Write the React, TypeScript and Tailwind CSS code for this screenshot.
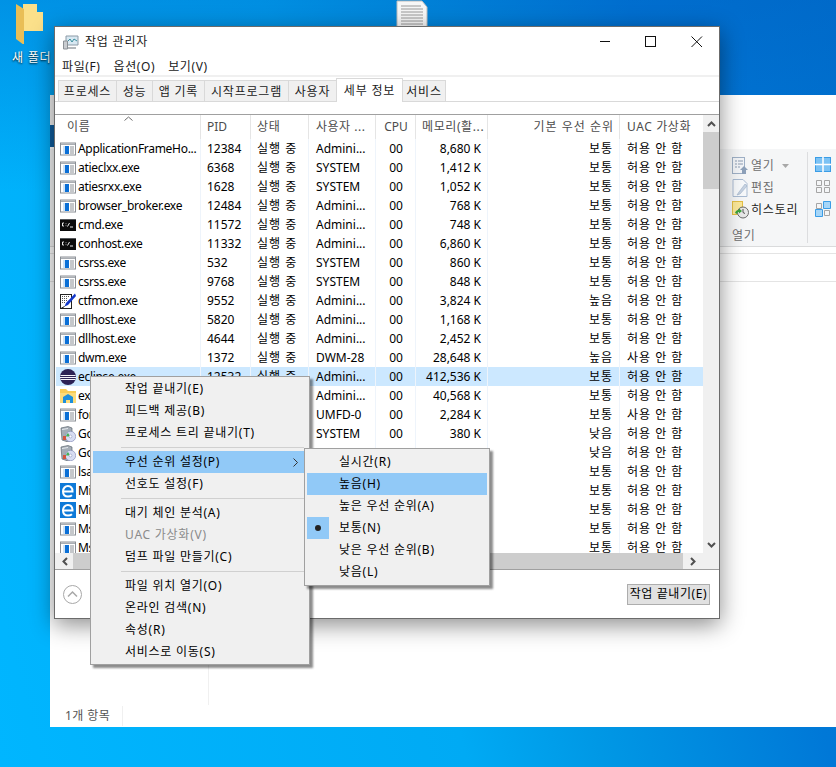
import React from "react";

type IconKind = "app" | "cmd" | "pen" | "eclipse" | "folder" | "setup" | "edge";

type Proc = {
  icon: IconKind;
  name: string;
  pid: string;
  user: string;
  mem: string;
  prio?: string;
  uac?: string;
  selected?: boolean;
};

const procs: Proc[] = [
  { icon: "app", name: "ApplicationFrameHo...", pid: "12384", user: "Admini...", mem: "8,680 K" },
  { icon: "app", name: "atieclxx.exe", pid: "6368", user: "SYSTEM", mem: "1,412 K" },
  { icon: "app", name: "atiesrxx.exe", pid: "1628", user: "SYSTEM", mem: "1,052 K" },
  { icon: "app", name: "browser_broker.exe", pid: "12484", user: "Admini...", mem: "768 K" },
  { icon: "cmd", name: "cmd.exe", pid: "11572", user: "Admini...", mem: "748 K" },
  { icon: "cmd", name: "conhost.exe", pid: "11332", user: "Admini...", mem: "6,860 K" },
  { icon: "app", name: "csrss.exe", pid: "532", user: "SYSTEM", mem: "860 K" },
  { icon: "app", name: "csrss.exe", pid: "9768", user: "SYSTEM", mem: "848 K" },
  { icon: "pen", name: "ctfmon.exe", pid: "9552", user: "Admini...", mem: "3,824 K", prio: "높음" },
  { icon: "app", name: "dllhost.exe", pid: "5820", user: "Admini...", mem: "1,168 K" },
  { icon: "app", name: "dllhost.exe", pid: "4644", user: "Admini...", mem: "2,452 K" },
  { icon: "app", name: "dwm.exe", pid: "1372", user: "DWM-28", mem: "28,648 K", prio: "높음", uac: "사용 안 함" },
  { icon: "eclipse", name: "eclipse.exe", pid: "12532", user: "Admini...", mem: "412,536 K", selected: true },
  { icon: "folder", name: "explorer.exe", pid: "6044", user: "Admini...", mem: "40,568 K" },
  { icon: "app", name: "fontdrvhost.exe", pid: "1012", user: "UMFD-0", mem: "2,284 K", uac: "사용 안 함" },
  { icon: "setup", name: "GoogleCrashHan...", pid: "3340", user: "SYSTEM", mem: "380 K", prio: "낮음" },
  { icon: "setup", name: "GoogleCrashHan...", pid: "3352", user: "SYSTEM", mem: "", prio: "낮음" },
  { icon: "app", name: "lsass.exe", pid: "680", user: "SYSTEM", mem: "" },
  { icon: "edge", name: "MicrosoftEdge.exe", pid: "8120", user: "Admini...", mem: "" },
  { icon: "edge", name: "MicrosoftEdgeCP...", pid: "8344", user: "Admini...", mem: "" },
  { icon: "app", name: "MsMpEng.exe", pid: "2740", user: "SYSTEM", mem: "" },
  { icon: "app", name: "MsSense.exe", pid: "2812", user: "SYSTEM", mem: "" },
];

function ProcIcon({ kind }: { kind: IconKind }) {
  if (kind === "app")
    return (
      <svg className="shrink-0" width="16" height="16" viewBox="0 0 16 16">
        <rect x="0.5" y="2" width="15" height="12" fill="#fff" stroke="#8b9096" />
        <rect x="1" y="2.5" width="14" height="1.5" fill="#a9adb2" />
        <rect x="5" y="5" width="4" height="8" fill="#0a6fd6" />
        <rect x="3" y="5" width="2" height="8" fill="#cfe3f7" />
        <path d="M10 6h4M10 8h4M10 10h4M10 12h4" stroke="#8b9096" />
      </svg>
    );
  if (kind === "cmd")
    return (
      <svg className="shrink-0" width="16" height="16" viewBox="0 0 16 16">
        <rect x="0" y="2" width="16" height="12" fill="#0c0c0c" />
        <rect x="0" y="2" width="16" height="1" fill="#55585c" />
        <path d="M4 6H2.5v3H4M6 6.5v.6M6 8.5v.6M7.5 9.5 9.5 6M10 10h3" stroke="#e8e8e8" fill="none" />
      </svg>
    );
  if (kind === "pen")
    return (
      <svg className="shrink-0" width="16" height="16" viewBox="0 0 16 16">
        <rect x="0.5" y="1.5" width="11" height="14" fill="#fff" stroke="#222" />
        <path d="M2 3.5h8M2 5.5h6M2 7.5h5M2 9.5h4" stroke="#555" strokeDasharray="1 1" />
        <path d="M15 0.5 6 10l-1.5 3.5L8 12l8-9z" fill="#1237c9" />
        <path d="M4.5 13.5 1 15.5" stroke="#111" />
      </svg>
    );
  if (kind === "eclipse")
    return (
      <svg className="shrink-0" width="16" height="16" viewBox="0 0 16 16">
        <circle cx="8" cy="8" r="8" fill="#2c2255" />
        <path d="M0.5 6.5h15M0 8.5h16M0.5 10.5h15" stroke="#f4f2fa" strokeWidth="1" />
      </svg>
    );
  if (kind === "folder")
    return (
      <svg className="shrink-0" width="16" height="16" viewBox="0 0 16 16">
        <path d="M0 1h6l2 2h8v12H0z" fill="#f8cc55" />
        <path d="M0 5h16v10H0z" fill="#fbdc7c" />
        <path d="M3 15V9l5-3 5 3v6h-3v-3H6v3z" fill="#1d8fdc" />
      </svg>
    );
  if (kind === "setup")
    return (
      <svg className="shrink-0" width="16" height="16" viewBox="0 0 16 16">
        <path d="M1 2 8 0.5 12 2v12l-4 2-6-2z" fill="#a4adb6" stroke="#5d6770" strokeWidth="0.7" />
        <path d="M2 3.5 8 2.5" stroke="#e6eaee" />
        <circle cx="10.5" cy="10.5" r="5.2" fill="#d7dcf2" stroke="#7d86b4" strokeWidth="0.6" />
        <circle cx="10.5" cy="10.5" r="1.4" fill="#fff" stroke="#7d86b4" strokeWidth="0.5" />
        <path d="M6 10.5a4.5 4.5 0 0 1 2-3.6l1.5 2.4a1.6 1.6 0 0 0-.6 1.2z" fill="#45b05a" />
        <path d="M3 10h3v4H3z" fill="#d4553f" />
      </svg>
    );
  return (
    <svg className="shrink-0" width="16" height="16" viewBox="0 0 16 16">
      <rect width="16" height="16" fill="#0f7ad8" />
      <path d="M3.5 8.5h9c0-3.5-2-5.5-4.6-5.5S3 5.3 3 8.5s2.2 5 5 5c1.6 0 3-.5 4-1.3" fill="none" stroke="#fff" strokeWidth="2" />
    </svg>
  );
}

function Row({ p }: { p: Proc }) {
  return (
    <div
      className={
        "grid h-[19px] shrink-0 grid-cols-[145px_50px_58px_67px_40px_72px_132px_83px] items-center text-black " +
        (p.selected ? "bg-[#cce8ff]" : "")
      }
    >
      <div className="flex h-full items-center gap-[2px] overflow-hidden whitespace-nowrap border-r border-[#eef4fb] pl-[4px]">
        <ProcIcon kind={p.icon} />
        <span className="tracking-[-0.3px]">{p.name}</span>
      </div>
      <div className="flex h-full items-center border-r border-[#eef4fb] pl-[6px]">{p.pid}</div>
      <div className="flex h-full items-center border-r border-[#eef4fb] pl-[6px] tracking-[1px]">실행 중</div>
      <div className="flex h-full items-center border-r border-[#eef4fb] pl-[7px]">{p.user}</div>
      <div className="flex h-full items-center justify-center border-r border-[#eef4fb] pl-[1px]">00</div>
      <div className="flex h-full items-center justify-end border-r border-[#eef4fb] pr-[6px]">{p.mem}</div>
      <div className="flex h-full items-center justify-end border-r border-[#eef4fb] pr-[6px] tracking-[1px]">{p.prio ?? "보통"}</div>
      <div className="flex h-full items-center pl-[7px] tracking-[1px]">{p.uac ?? "허용 안 함"}</div>
    </div>
  );
}

function TaskManager() {
  return (
    <div className="absolute left-[54px] top-[26px] flex h-[593px] w-[666px] flex-col border border-[#6b6b6b] bg-white text-[12px] leading-[16px] shadow-[0_6px_22px_rgba(0,0,0,0.45)]">
      {/* 제목 표시줄 */}
      <div className="flex h-[26px] shrink-0 items-center pl-[8px] pt-[4px]">
        <svg className="shrink-0" width="16" height="16" viewBox="0 0 16 16">
          <path d="M3 2h12v9H3z" fill="#d8e8f2" stroke="#8c9aa6" />
          <path d="M4 8 7 5l2 3 2-3 3 2" fill="none" stroke="#3a8f9e" />
          <path d="M0.5 7h4v8h-4z" fill="#c9ccd0" stroke="#8c9196" />
          <path d="M5 13h8v2H5z" fill="#b4b8bc" />
        </svg>
        <span className="ml-[6px] tracking-[0.8px] text-[#1a1a1a]">작업 관리자</span>
        <div className="ml-auto flex items-center">
          <svg width="45" height="12" viewBox="0 0 45 12">
            <path d="M0 5.5h10" stroke="#111" />
          </svg>
          <svg width="46" height="12" viewBox="0 0 46 12">
            <rect x="0.5" y="0.5" width="10" height="10" fill="none" stroke="#111" />
          </svg>
          <svg width="28" height="12" viewBox="0 0 28 12">
            <path d="M0.5 0.5 11 11M11 0.5 0.5 11" stroke="#111" />
          </svg>
        </div>
      </div>

      {/* 메뉴 */}
      <div className="flex h-[22px] shrink-0 items-center gap-[13px] pl-[7px] pt-[6px] tracking-[0.6px] text-[#1a1a1a]">
        <span>파일(F)</span>
        <span>옵션(O)</span>
        <span>보기(V)</span>
      </div>
      <div className="h-[2px] shrink-0 bg-[#f0f0f0]" />

      {/* 탭 */}
      <div className="flex h-[25px] shrink-0 items-end border-b border-[#d9d9d9] pl-[3px] tracking-[0.8px] text-[#1a1a1a]">
        <Tab w="w-[59px]" label="프로세스" />
        <Tab w="w-[37px]" label="성능" />
        <Tab w="w-[53px]" label="앱 기록" />
        <Tab w="w-[85px]" label="시작프로그램" />
        <Tab w="w-[49px]" label="사용자" />
        <div className="z-10 -mb-px -ml-px flex h-[24px] w-[67px] items-center justify-center border border-b-0 border-[#d9d9d9] bg-white">
          세부 정보
        </div>
        <Tab w="w-[44px]" label="서비스" />
      </div>
      <div className="h-[12px] shrink-0" />

      {/* 목록 */}
      <div className="flex h-[439px] shrink-0 border-t border-[#a0a0a0] pl-px">
        <div className="flex w-[647px] flex-col overflow-hidden">
          <div className="relative grid h-[24px] shrink-0 grid-cols-[145px_50px_58px_67px_40px_72px_132px_83px] items-center text-[#4c4c4c]">
            <svg className="absolute left-[68px] top-[1px]" width="9" height="5" viewBox="0 0 9 5">
              <path d="M0.5 4.5 4.5 1l4 3.5" fill="none" stroke="#6d6d6d" />
            </svg>
            <div className="flex h-full items-center border-r border-[#e5e5e5] pl-[11px] tracking-[0.8px]">이름</div>
            <div className="flex h-full items-center border-r border-[#e5e5e5] pl-[6px]">PID</div>
            <div className="flex h-full items-center border-r border-[#e5e5e5] pl-[6px] tracking-[0.8px]">상태</div>
            <div className="flex h-full items-center overflow-hidden whitespace-nowrap border-r border-[#e5e5e5] pl-[7px] tracking-[0.5px]">사용자 ...</div>
            <div className="flex h-full items-center justify-center border-r border-[#e5e5e5] pl-[1px]">CPU</div>
            <div className="flex h-full items-center overflow-hidden whitespace-nowrap border-r border-[#e5e5e5] pl-[6px] tracking-[0.6px]">메모리(활...</div>
            <div className="flex h-full items-center justify-end border-r border-[#e5e5e5] pr-[5px] tracking-[1px]">기본 우선 순위</div>
            <div className="flex h-full items-center whitespace-nowrap pl-[7px] tracking-[0.6px]">UAC 가상화</div>
          </div>
          {procs.map((p, i) => (
            <Row key={i} p={p} />
          ))}
        </div>

        {/* 세로 스크롤 */}
        <div className="flex w-[16px] flex-col bg-[#f0f0f0]">
          <div className="flex h-[17px] shrink-0 items-center justify-center">
            <svg width="9" height="6" viewBox="0 0 9 6">
              <path d="M1 5 4.5 1.5 8 5" fill="none" stroke="#505050" strokeWidth="2" />
            </svg>
          </div>
          <div className="h-[57px] shrink-0 bg-[#cdcdcd]" />
          <div className="mt-auto flex h-[17px] shrink-0 items-center justify-center">
            <svg width="9" height="6" viewBox="0 0 9 6">
              <path d="M1 1 4.5 4.5 8 1" fill="none" stroke="#505050" strokeWidth="2" />
            </svg>
          </div>
        </div>
      </div>

      {/* 가로 스크롤 */}
      <div className="flex h-[16px] shrink-0 items-stretch bg-[#f0f0f0] pl-px">
        <div className="flex w-[17px] items-center justify-center">
          <svg width="6" height="9" viewBox="0 0 6 9">
            <path d="M5 1 1.5 4.5 5 8" fill="none" stroke="#505050" strokeWidth="2" />
          </svg>
        </div>
        <div className="w-[610px] bg-[#cdcdcd]" />
        <div className="flex w-[20px] items-center justify-center">
          <svg width="6" height="9" viewBox="0 0 6 9">
            <path d="M1 1 4.5 4.5 1 8" fill="none" stroke="#505050" strokeWidth="2" />
          </svg>
        </div>
      </div>

      {/* 아래쪽 */}
      <div className="flex flex-1 items-center justify-between border-t border-[#a0a0a0] pl-[8px] pr-[9px]">
        <svg width="19" height="19" viewBox="0 0 19 19">
          <circle cx="9.5" cy="9.5" r="9" fill="none" stroke="#a8a8a8" />
          <path d="M5 11.5 9.5 7l4.5 4.5" fill="none" stroke="#a8a8a8" strokeWidth="1.5" />
        </svg>
        <div className="flex h-[21px] w-[83px] items-center justify-center whitespace-nowrap border border-[#adadad] bg-[#e1e1e1] tracking-[0.6px] text-black">
          작업 끝내기(E)
        </div>
      </div>
    </div>
  );
}

function Tab({ w, label }: { w: string; label: string }) {
  return (
    <div className={"flex h-[21px] items-center justify-center border border-b-0 border-[#d9d9d9] bg-[#f0f0f0] pt-px -ml-px first:ml-0 " + w}>
      {label}
    </div>
  );
}

function MenuItem({ label, active, disabled, arrow }: { label: string; active?: boolean; disabled?: boolean; arrow?: boolean }) {
  return (
    <div
      className={
        "flex h-[22px] items-center justify-between pl-[32px] pr-[6px] tracking-[0.75px] " +
        (active ? "bg-[#91c9f7] " : "") +
        (disabled ? "text-[#8a8a8a]" : "text-black")
      }
    >
      <span>{label}</span>
      {arrow && (
        <svg width="5" height="9" viewBox="0 0 5 9">
          <path d="M0.5 0.5 4.5 4.5 0.5 8.5" fill="none" stroke="#333" />
        </svg>
      )}
    </div>
  );
}

function Sep() {
  return (
    <div className="flex h-[7px] items-center pl-[28px]">
      <div className="h-px w-full bg-[#d0d0d0]" />
    </div>
  );
}

function ContextMenu() {
  return (
    <div className="absolute left-[90px] top-[376px] w-[220px] border border-[#a0a0a0] bg-[#f0f0f0] py-px pl-[2px] pr-[5px] text-[12px] leading-[16px] shadow-[3px_3px_2px_rgba(0,0,0,0.45)]">
      <MenuItem label="작업 끝내기(E)" />
      <MenuItem label="피드백 제공(B)" />
      <MenuItem label="프로세스 트리 끝내기(T)" />
      <Sep />
      <MenuItem label="우선 순위 설정(P)" active arrow />
      <MenuItem label="선호도 설정(F)" />
      <Sep />
      <MenuItem label="대기 체인 분석(A)" />
      <MenuItem label="UAC 가상화(V)" disabled />
      <MenuItem label="덤프 파일 만들기(C)" />
      <Sep />
      <MenuItem label="파일 위치 열기(O)" />
      <MenuItem label="온라인 검색(N)" />
      <MenuItem label="속성(R)" />
      <MenuItem label="서비스로 이동(S)" />
    </div>
  );
}

function SubMenu() {
  return (
    <div className="absolute left-[304px] top-[448px] w-[186px] border border-[#a0a0a0] bg-[#f0f0f0] pb-[2px] pl-[2px] pr-[2px] pt-[2px] text-[12px] leading-[16px] shadow-[3px_3px_2px_rgba(0,0,0,0.45)]">
      <MenuItem label="실시간(R)" />
      <MenuItem label="높음(H)" active />
      <MenuItem label="높은 우선 순위(A)" />
      <div className="relative">
        <div className="absolute left-0 top-0 flex h-[22px] w-[22px] items-center justify-center bg-[#91c9f7]">
          <div className="h-[6px] w-[6px] rounded-full bg-[#222]" />
        </div>
        <MenuItem label="보통(N)" />
      </div>
      <MenuItem label="낮은 우선 순위(B)" />
      <MenuItem label="낮음(L)" />
    </div>
  );
}

function Explorer() {
  return (
    <div className="absolute left-[50px] top-[95px] flex h-[632px] w-[786px] flex-col overflow-hidden bg-white text-[12px] leading-[16px] text-[#3c3c3c]">
      <div className="flex h-[54px] shrink-0 flex-col">
        <div className="h-[30px] w-[4px] bg-[#f0f0f0]" />
        <div className="h-[22px] w-[4px] bg-[#0f5d9e]" />
      </div>

      {/* 리본 */}
      <div className="flex h-[98px] shrink-0 border-b border-[#dadbdc] bg-[#f5f6f7] pl-[682px]">
        <div className="flex w-[75px] flex-col gap-[4px] pt-[8px] tracking-[0.8px] text-[#6e6e6e]">
          <div className="flex h-[18px] items-center gap-[2px]">
            <svg width="17" height="18" viewBox="0 0 17 18">
              <rect x="0.5" y="0.5" width="12" height="16" fill="#f3f5f8" stroke="#9fb0c6" />
              <path d="M3 4h2M6 4h5M3 7h2M6 7h5M3 10h2M6 10h2" stroke="#8d9db3" />
              <path d="M10 17v-4H8l4-4 4 4h-2v4z" fill="#8ea1ba" />
            </svg>
            <span>열기</span>
            <svg className="ml-[5px]" width="7" height="4" viewBox="0 0 7 4">
              <path d="M0 0h7L3.5 4z" fill="#a8a8a8" />
            </svg>
          </div>
          <div className="flex h-[18px] items-center gap-[2px]">
            <svg width="17" height="18" viewBox="0 0 17 18">
              <path d="M1 0.5h10l4 4v13H1z" fill="#f7f9fb" stroke="#a9bbd2" />
              <path d="M13 5 7 13l-2 3 3-1 7-8z" fill="#c7d3e2" stroke="#9eb0c7" strokeWidth="0.6" />
            </svg>
            <span>편집</span>
          </div>
          <div className="flex h-[18px] items-center gap-[2px]">
            <svg width="17" height="18" viewBox="0 0 17 18">
              <rect x="0.5" y="0.5" width="10" height="13" fill="#fbe89a" stroke="#e4bf45" />
              <circle cx="11" cy="11.5" r="5.5" fill="#e8e8e8" stroke="#6b6b6b" />
              <path d="M11 8v3.5l2 1" fill="none" stroke="#555" />
              <path d="M3 12a4 4 0 0 1 4-3v-1.5l3 2.5-3 2.5V11a2 2 0 0 0-2 2z" fill="#3aa53a" />
            </svg>
            <span className="text-[#222]">히스토리</span>
          </div>
          <span className="mt-[5px]">열기</span>
        </div>
        <div className="mb-[3px] mt-[3px] w-px bg-[#dcdddf]" />
        <div className="ml-[7px] flex flex-col gap-[7px] pt-[8px]">
          <svg width="16" height="15" viewBox="0 0 16 15">
            <rect x="0.5" y="0.5" width="15" height="14" fill="#7cc2f4" stroke="#3a9de6" />
            <path d="M8 0v15M0 7.5h16" stroke="#fff" strokeWidth="1.5" />
          </svg>
          <svg width="16" height="15" viewBox="0 0 16 15">
            <path d="M1.5 1.5h5v5h-5zM9.5 1.5h5v5h-5zM1.5 8.5h5v5h-5zM9.5 8.5h5v5h-5z" fill="#f5f6f7" stroke="#a5a5a5" />
          </svg>
          <svg width="16" height="16" viewBox="0 0 16 16">
            <path d="M1.5 2.5h5v5h-5zM9.5 9.5h5v5h-5z" fill="#f5f6f7" stroke="#a5a5a5" />
            <path d="M8.5 0.5h7v7h-7zM0.5 8.5h7v7h-7z" fill="#a6d6f8" stroke="#3a9de6" />
          </svg>
        </div>
      </div>

      <div className="h-[6px] shrink-0" />
      <div className="h-[29px] shrink-0 border-y border-[#e4e4e4]" />

      <div className="flex flex-1">
        <div className="w-[159px] border-r border-[#f0f0f0]" />
      </div>

      {/* 상태 표시줄 */}
      <div className="flex h-[22px] shrink-0 items-center pl-[15px] tracking-[0.4px] text-[#555]">
        <span>1개 항목</span>
        <div className="ml-[12px] h-[20px] w-px bg-[#f0f0f0]" />
      </div>
    </div>
  );
}

export default function App() {
  return (
    <div className="relative h-[767px] w-[836px] overflow-hidden bg-[linear-gradient(180deg,rgba(0,90,190,0.35)_0%,rgba(0,90,190,0)_25%),linear-gradient(75deg,#00b6ff_0%,#00aaf4_45%,#0098e5_58%,#0078d7_80%,#0072cf_100%)] font-['Noto_Sans','Noto_Sans_CJK_KR',sans-serif]">
      {/* 바탕화면 아이콘 */}
      <svg className="absolute left-[15px] top-[3px]" width="29" height="41" viewBox="0 0 29 41">
        <path d="M8 1h14v8h6v19H8z" fill="#fbe08a" />
        <path d="M1 1l8 5v36l-8-6z" fill="#e9be56" />
      </svg>
      <span className="absolute left-[12px] top-[50px] whitespace-nowrap text-[12px] leading-[16px] tracking-[0.8px] text-white [text-shadow:0_1px_2px_rgba(0,0,0,0.9)]">
        새 폴더
      </span>
      <svg className="absolute left-[396px] top-0" width="32" height="27" viewBox="0 0 32 27">
        <path d="M1 1h25l5 6v20H1z" fill="#f7f7f7" stroke="#bdbdbd" />
        <path d="M5 6h20M5 9h22M5 12h22M5 15h22M5 18h22M5 21h22M5 24h22" stroke="#9a9a9a" />
      </svg>

      <Explorer />
      <TaskManager />
      <ContextMenu />
      <SubMenu />
    </div>
  );
}
